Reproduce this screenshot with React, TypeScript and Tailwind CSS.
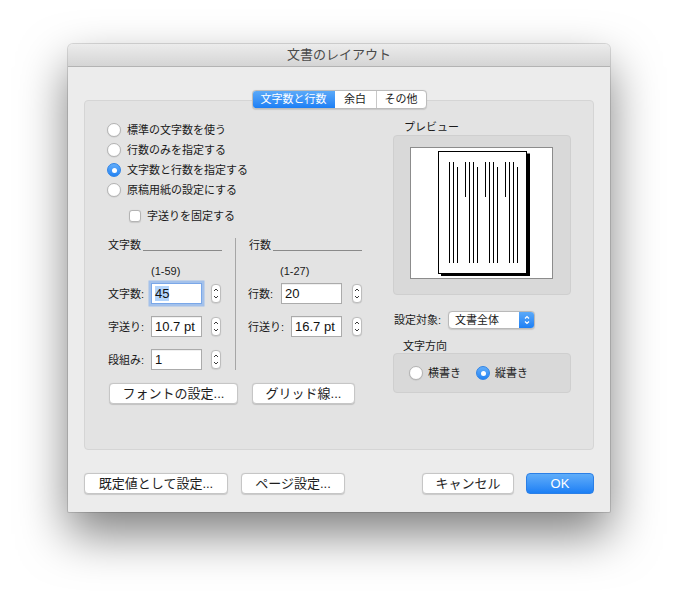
import React from "react";

// Vertical text preview: groups of columns inside the page (x offsets relative to page)
const previewLines: { x: number; top: number; bottom: number }[] = [
  { x: 11, top: 11, bottom: 112 },
  { x: 15, top: 11, bottom: 112 },
  { x: 19, top: 16, bottom: 112 },
  ...[27, 47, 67].flatMap((b) => [
    { x: b, top: 11, bottom: 46 },
    { x: b + 4, top: 11, bottom: 112 },
    { x: b + 8, top: 11, bottom: 112 },
    { x: b + 12, top: 16, bottom: 112 },
  ]),
];

function Radio({ checked }: { checked?: boolean }) {
  if (checked) {
    return (
      <span className="w-[14px] h-[14px] rounded-full bg-gradient-to-b from-[#62adf9] to-[#2083f4] border border-[#2f83e6] flex items-center justify-center shrink-0">
        <span className="w-[5px] h-[5px] rounded-full bg-white" />
      </span>
    );
  }
  return (
    <span className="w-[14px] h-[14px] rounded-full bg-white border border-[#b4b4b4] shadow-[0_0.5px_1px_rgba(0,0,0,0.12)] shrink-0" />
  );
}

function Stepper() {
  return (
    <div className="w-[10px] h-[19px] rounded-[4px] bg-white border border-[#bdbdbd] shadow-[0_0.5px_1px_rgba(0,0,0,0.15)] flex items-center justify-center">
      <svg width="8" height="17" viewBox="0 0 8 17">
        <path d="M2 6 L4 4 L6 6" stroke="#3a3a3a" strokeWidth="1" fill="none" />
        <path d="M2 11 L4 13 L6 11" stroke="#3a3a3a" strokeWidth="1" fill="none" />
      </svg>
    </div>
  );
}

function Field({ value, width, focused }: { value: string; width: string; focused?: boolean }) {
  return (
    <div
      className={`h-[21px] bg-white flex items-center px-[3px] text-[13px] text-[#111] ${width} ${
        focused
          ? "border border-[#7aa7e8] shadow-[0_0_0_2.5px_rgba(120,170,240,0.6)]"
          : "border border-[#ababab] shadow-[inset_0_1px_0_rgba(0,0,0,0.06)]"
      }`}
    >
      {focused ? <span className="bg-[#b3d4fb] leading-[15px]">{value}</span> : <span className="leading-[15px]">{value}</span>}
    </div>
  );
}

function Button({ label, width, primary }: { label: string; width: string; primary?: boolean }) {
  return (
    <div
      className={`h-[21px] rounded-[4px] flex items-center justify-center text-[13px] ${width} ${
        primary
          ? "bg-gradient-to-b from-[#5fadf9] to-[#1b7ff5] border border-[#2b7fe6] text-white"
          : "bg-white border border-[#c6c6c6] shadow-[0_0.5px_1px_rgba(0,0,0,0.15)] text-[#1e1e1e]"
      }`}
    >
      {label}
    </div>
  );
}

function SectionHeader({ label }: { label: string }) {
  return (
    <div className="h-[14px] flex items-end">
      <span className="text-[11px] leading-[14px] pl-[1px]">{label}</span>
      <div className="flex-1 ml-[2px] mb-[1px] border-b border-[#8a8a8a]" />
    </div>
  );
}

export default function App() {
  return (
    <div className="min-h-screen bg-white pt-[44px] pl-[68px] font-['Liberation_Sans','Noto_Sans_CJK_JP',sans-serif] text-[#1a1a1a]">
      <div className="w-[542px] h-[468px] bg-[#ececec] rounded-t-[5px] rounded-b-[1px] overflow-hidden flex flex-col shadow-[0_0_0_1px_rgba(0,0,0,0.13),0_22px_48px_rgba(0,0,0,0.5)]">
        {/* Title bar */}
        <div className="h-[23px] shrink-0 bg-gradient-to-b from-[#ececec] to-[#d5d5d5] border-b border-[#b3b3b3] flex items-center justify-center text-[13px] text-[#4a4a4a]">
          文書のレイアウト
        </div>

        <div className="px-4 flex flex-col">
          {/* Tabs */}
          <div className="mt-[23px] flex justify-center relative z-10">
            <div className="flex h-[19px] rounded-[4px] border border-[#bcbcbc] bg-white overflow-hidden text-[11px] shadow-[0_0.5px_1px_rgba(0,0,0,0.12)]">
              <div className="w-[82px] bg-gradient-to-b from-[#5aa9f8] to-[#1b7ff5] text-white flex items-center justify-center">
                文字数と行数
              </div>
              <div className="w-[41px] flex items-center justify-center">余白</div>
              <div className="w-[50px] border-l border-[#c8c8c8] flex items-center justify-center">その他</div>
            </div>
          </div>

          {/* Group box */}
          <div className="-mt-[9px] h-[350px] bg-[#e3e3e3] border border-[#d5d5d5] rounded-[4px] flex pl-[22px] pt-[19px]">
            {/* Left */}
            <div className="w-[256px] flex flex-col text-[11px]">
              {[
                { label: "標準の文字数を使う" },
                { label: "行数のみを指定する" },
                { label: "文字数と行数を指定する", checked: true },
                { label: "原稿用紙の設定にする" },
              ].map((r) => (
                <div key={r.label} className="h-[20px] flex items-center gap-[6px]">
                  <Radio checked={r.checked} />
                  <span className="leading-[14px]">{r.label}</span>
                </div>
              ))}

              <div className="mt-[6px] h-[20px] flex items-center pl-[22px] gap-[6px]">
                <span className="w-[12px] h-[12px] rounded-[3px] bg-white border border-[#b4b4b4] shadow-[0_0.5px_1px_rgba(0,0,0,0.12)]" />
                <span className="leading-[14px]">字送りを固定する</span>
              </div>

              <div className="mt-[12px] flex">
                {/* 文字数 column */}
                <div className="w-[115px] flex flex-col">
                  <SectionHeader label="文字数" />
                  <div className="mt-[12px] h-[14px] pl-[44px] leading-[14px]">(1-59)</div>
                  <div className="mt-[5px] h-[21px] flex items-center">
                    <span className="w-[44px] pl-[1px] leading-[14px]">文字数:</span>
                    <Field value="45" width="w-[51px]" focused />
                    <div className="ml-[9px]">
                      <Stepper />
                    </div>
                  </div>
                  <div className="mt-[12px] h-[21px] flex items-center">
                    <span className="w-[44px] pl-[1px] leading-[14px]">字送り:</span>
                    <Field value="10.7 pt" width="w-[51px]" />
                    <div className="ml-[9px]">
                      <Stepper />
                    </div>
                  </div>
                  <div className="mt-[12px] h-[21px] flex items-center">
                    <span className="w-[44px] pl-[1px] leading-[14px]">段組み:</span>
                    <Field value="1" width="w-[51px]" />
                    <div className="ml-[9px]">
                      <Stepper />
                    </div>
                  </div>
                </div>

                <div className="ml-[13px] w-px bg-[#a6a6a6]" />

                {/* 行数 column */}
                <div className="ml-[12px] w-[114px] flex flex-col">
                  <SectionHeader label="行数" />
                  <div className="mt-[12px] h-[14px] pl-[32px] leading-[14px]">(1-27)</div>
                  <div className="mt-[5px] h-[21px] flex items-center">
                    <span className="w-[33px] leading-[14px]">行数:</span>
                    <Field value="20" width="w-[61px]" />
                    <div className="ml-[10px]">
                      <Stepper />
                    </div>
                  </div>
                  <div className="mt-[12px] h-[21px] flex items-center">
                    <span className="w-[43px] leading-[14px]">行送り:</span>
                    <Field value="16.7 pt" width="w-[51px]" />
                    <div className="ml-[10px]">
                      <Stepper />
                    </div>
                  </div>
                </div>
              </div>

              <div className="mt-[13px] flex gap-[14px] pl-[2px]">
                <Button label="フォントの設定..." width="w-[129px]" />
                <Button label="グリッド線..." width="w-[103px]" />
              </div>
            </div>

            {/* Right */}
            <div className="ml-[30px] w-[178px] flex flex-col text-[11px]">
              <div className="h-[14px] pl-[11px] leading-[14px]">プレビュー</div>
              <div className="mt-[1px] h-[160px] bg-[#d9d9d9] border border-[#cfcfcf] rounded-[4px] pl-[16px] pt-[11px]">
                <div className="w-[143px] h-[132px] bg-white border border-[#8c8c8c]">
                  <svg width="141" height="130" viewBox="0 0 141 130">
                    <rect x="30" y="5.5" width="89" height="122.5" fill="#000" />
                    <rect x="27.5" y="3.5" width="88" height="122" fill="#fff" stroke="#000" strokeWidth="1" />
                    {previewLines.map((l) => (
                      <line
                        key={l.x}
                        x1={27 + l.x + 0.5}
                        x2={27 + l.x + 0.5}
                        y1={3 + l.top}
                        y2={3 + l.bottom}
                        stroke="#000"
                        strokeWidth="1"
                      />
                    ))}
                  </svg>
                </div>
              </div>

              <div className="mt-[16px] h-[18px] flex items-center">
                <span className="w-[55px] pl-[1px] leading-[14px]">設定対象:</span>
                <div className="w-[87px] h-[18px] rounded-[4px] border border-[#b9b9b9] bg-white flex overflow-hidden shadow-[0_0.5px_1px_rgba(0,0,0,0.12)]">
                  <span className="flex-1 pl-[6px] leading-[16px]">文書全体</span>
                  <div className="w-[15px] bg-gradient-to-b from-[#5aa9f8] to-[#1b7ff5] flex items-center justify-center">
                    <svg width="8" height="14" viewBox="0 0 8 14">
                      <path d="M2 5.5 L4 3.5 L6 5.5" stroke="#fff" strokeWidth="1.2" fill="none" />
                      <path d="M2 8.5 L4 10.5 L6 8.5" stroke="#fff" strokeWidth="1.2" fill="none" />
                    </svg>
                  </div>
                </div>
              </div>

              <div className="mt-[10px] h-[14px] pl-[10px] leading-[14px]">文字方向</div>
              <div className="h-[40px] bg-[#d9d9d9] border border-[#cfcfcf] rounded-[4px] flex items-center pl-[15px]">
                <div className="flex items-center gap-[5px]">
                  <Radio />
                  <span className="leading-[14px]">横書き</span>
                </div>
                <div className="ml-[15px] flex items-center gap-[5px]">
                  <Radio checked />
                  <span className="leading-[14px]">縦書き</span>
                </div>
              </div>
            </div>
          </div>

          {/* Bottom buttons */}
          <div className="mt-[23px] flex">
            <Button label="既定値として設定..." width="w-[144px]" />
            <div className="ml-[13px]">
              <Button label="ページ設定..." width="w-[104px]" />
            </div>
            <div className="flex-1" />
            <Button label="キャンセル" width="w-[92px]" />
            <div className="ml-[12px]">
              <Button label="OK" width="w-[68px]" primary />
            </div>
          </div>
        </div>
      </div>
    </div>
  );
}
